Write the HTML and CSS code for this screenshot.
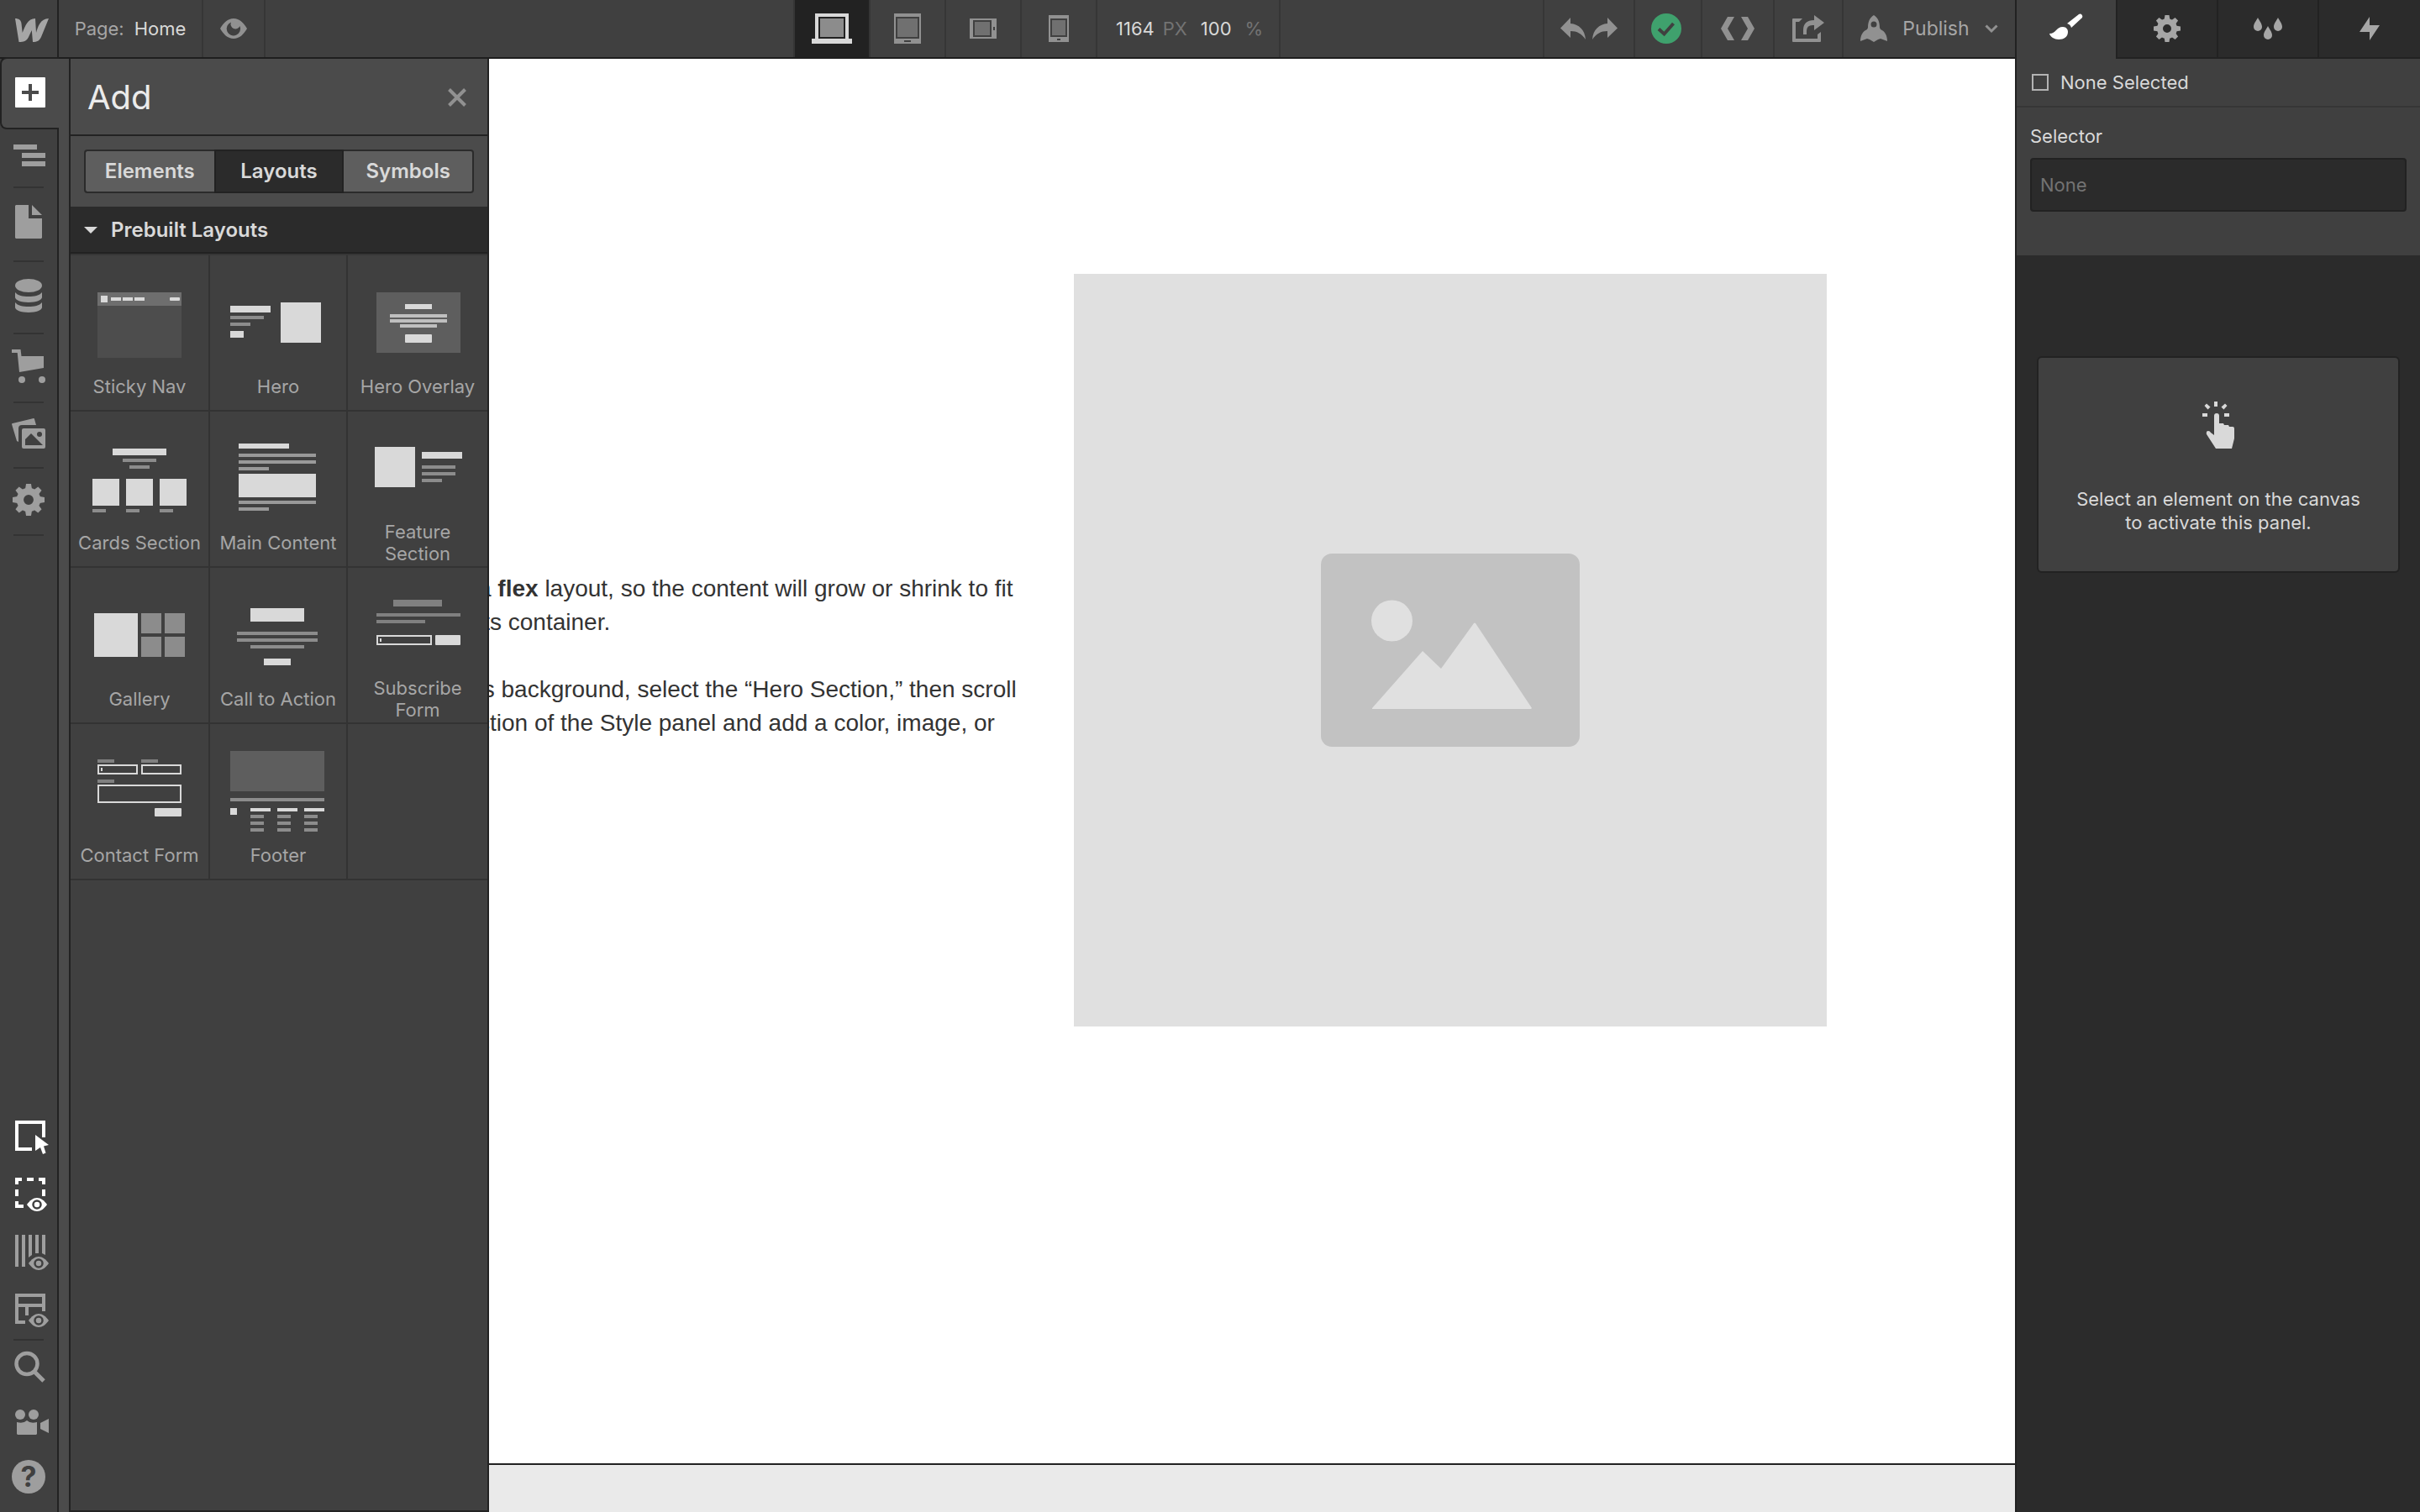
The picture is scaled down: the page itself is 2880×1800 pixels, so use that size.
FILE: index.html
```html
<!DOCTYPE html>
<html lang="en">
<head>
    <meta charset="UTF-8">
    <meta name="viewport" content="width=device-width, initial-scale=1.0">
    <title>Designer - Home</title>
    <link rel="stylesheet" href="styles.css">
</head>
<body>
    <!-- Shared icons -->
    <svg class="symbols" aria-hidden="true">
        <symbol id="gear" viewBox="0 0 32 32">
            <circle cx="16" cy="16" r="8.5" fill="none" stroke="currentColor" stroke-width="7"/>
            <g fill="currentColor">
                <path id="tooth" d="M13.5 0h5l1 6h-7z"/>
                <use href="#tooth" transform="rotate(45 16 16)"/>
                <use href="#tooth" transform="rotate(90 16 16)"/>
                <use href="#tooth" transform="rotate(135 16 16)"/>
                <use href="#tooth" transform="rotate(180 16 16)"/>
                <use href="#tooth" transform="rotate(225 16 16)"/>
                <use href="#tooth" transform="rotate(270 16 16)"/>
                <use href="#tooth" transform="rotate(315 16 16)"/>
            </g>
        </symbol>
        <symbol id="eye" viewBox="0 0 24 16">
            <path d="M0 8C3.5 3 7.5 0 12 0s8.5 3 12 8c-3.5 5-7.5 8-12 8S3.5 13 0 8z" fill="currentColor"/>
            <circle cx="12" cy="8" r="4.5" fill="none" stroke="#404040" stroke-width="2.5"/>
        </symbol>
    </svg>

    <div class="app">
        <div class="workspace">
            <header class="topbar">
                <button class="logo" aria-label="Menu">
                    <svg width="40" height="28" viewBox="0 0 40 28"><path d="M0 0c4.5 0 7 2 7.5 6l1.2 11C12 9 15 0 24 0l1 17C27 10 30 0 40 0L31 22c-2 4.5-5 6-10 6l-1.2-14-4 8.5C13.5 27 10 28 4.5 28z"/></svg>
                </button>
                <div class="topbar-left">
                    <button class="page-name"><span>Page:</span> Home</button>
                    <button class="preview" aria-label="Preview">
                        <svg width="32" height="24" viewBox="0 0 32 24"><path fill-rule="evenodd" d="M0 12C4 5 9 0 16 0s12 5 16 12c-4 7-9 12-16 12S4 19 0 12zM13 4.5A8.200 8.200 0 1 0 23.5 9A5.500 5.500 0 1 1 13 4.500z"/></svg>
                    </button>
                </div>
                <div class="topbar-center">
                    <button class="device active" aria-label="Desktop">
                        <svg width="48" height="36" viewBox="0 0 48 36"><path fill-rule="evenodd" d="M4 0h40v30h4v6H0v-6h4zM8 4v26h32V4z"/><path class="screen" d="M10 6h28v22H10z"/></svg>
                    </button>
                    <button class="device" aria-label="Tablet">
                        <svg width="32" height="36" viewBox="0 0 32 36"><path fill-rule="evenodd" d="M0 0h32v36H0zM2 4v26h28V4zM12 32v2h8v-2z"/><path class="screen" d="M4 6h24v22H4z"/></svg>
                    </button>
                    <button class="device" aria-label="Mobile landscape">
                        <svg width="32" height="24" viewBox="0 0 32 24"><path fill-rule="evenodd" d="M0 0h32v24H0zM4 2v20h22V2zM28 10v4h2v-4z"/><path class="screen" d="M6 4h18v16H6z"/></svg>
                    </button>
                    <button class="device" aria-label="Mobile portrait">
                        <svg width="24" height="32" viewBox="0 0 24 32"><path fill-rule="evenodd" d="M0 0h24v32H0zM2 4v22h20V4zM10 28v2h4v-2z"/><path class="screen" d="M4 6h16v18H4z"/></svg>
                    </button>
                    <div class="canvas-size">
                        <span class="value">1164</span><span class="unit">PX</span>
                        <span class="value zoom">100</span><span class="unit percent">%</span>
                    </div>
                </div>
                <div class="topbar-right">
                    <div class="history">
                        <button aria-label="Undo"><svg width="30" height="26" viewBox="0 0 30 26"><path d="M12 0v7c10 1 17 7 18 19-5-7-10-10-18-10v8L0 12.5z"/></svg></button>
                        <button aria-label="Redo"><svg width="30" height="26" viewBox="0 0 30 26"><path d="M18 0v7C8 8 1 14 0 26c5-7 10-10 18-10v8l12-11.5z"/></svg></button>
                    </div>
                    <button class="saved" aria-label="Saved">
                        <svg width="36" height="36" viewBox="0 0 36 36"><circle cx="18" cy="18" r="18"/><path d="M9 18.5l6.5 6L26.5 12" fill="none" stroke="#404040" stroke-width="4"/></svg>
                    </button>
                    <button class="code" aria-label="Export code">
                        <svg width="40" height="28" viewBox="0 0 40 28"><path d="M8 0h8L8 14l8 14H8L0 14zM32 0h-8l8 14-8 14h8l8-14z"/></svg>
                    </button>
                    <button class="share" aria-label="Share">
                        <svg width="38" height="32" viewBox="0 0 38 32"><path d="M0 5q0-1 1-1h11L8 8H4v20h26v-5l4-3v11q0 1-1 1H1q-1 0-1-1zM26 0l12 9-12 9v-6q-9-1-9 7v4h-4v-5Q13 6 26 6z"/></svg>
                    </button>
                    <button class="publish">
                        <svg width="32" height="32" viewBox="0 0 32 32"><path fill-rule="evenodd" d="M16 0c5 3 7 8 7 15l1 2c5 2 8 7 8 14l-8-3-3 1-5 3-5-3-3-1-8 3c0-7 3-12 8-14l1-2c0-7 2-12 7-15zm0 7.5a3.5 3.5 0 1 0 0 7 3.5 3.5 0 1 0 0-7z"/></svg>
                        Publish
                        <svg width="16" height="10" viewBox="0 0 16 10"><path d="M1.5 1.5L8 8l6.5-6.5" fill="none" stroke="currentColor" stroke-width="3"/></svg>
                    </button>
                </div>
            </header>

            <div class="main">
                <nav class="rail">
                    <div class="rail-group">
                        <button class="active" aria-label="Add">
                            <svg width="44" height="36" viewBox="0 0 44 36"><rect x="6" width="36" height="36" rx="1"/><path d="M22 8h4v8h8v4h-8v8h-4v-8h-8v-4h8z" fill="#4b4b4b"/></svg>
                        </button>
                        <button aria-label="Navigator">
                            <svg width="44" height="28" viewBox="0 0 44 28"><path d="M4 0h28v6H4zM14 10h28v6H14zM14 20h28v6H14z"/></svg>
                        </button>
                        <hr>
                        <button aria-label="Pages">
                            <svg width="44" height="46" viewBox="0 0 44 46"><path d="M7 2h15v16h16v23l-1 1H7l-1-1V3zM26 2l12 12H26z"/></svg>
                        </button>
                        <hr>
                        <button aria-label="CMS">
                            <svg width="44" height="44" viewBox="0 0 44 44"><ellipse cx="22" cy="10" rx="16" ry="8"/><path d="M6 18c3 4 9 5 16 5s13-1 16-5v6c0 3-7 6-16 6s-16-3-16-6zM6 30c3 4 9 5 16 5s13-1 16-5v6c0 3-7 6-16 6s-16-3-16-6z"/></svg>
                        </button>
                        <hr>
                        <button aria-label="Ecommerce">
                            <svg width="44" height="40" viewBox="0 0 44 40"><path d="M2 0h10.5l1 8H40v14L11 27 8.7 4H2z"/><circle cx="14" cy="36" r="4"/><circle cx="38" cy="36" r="4"/></svg>
                        </button>
                        <hr>
                        <button aria-label="Assets">
                            <svg width="44" height="36" viewBox="0 0 44 36"><path d="M2 7Q2 6 3 6L28 0q1 0 1 1l2 7H14q-4 0-4 4v16l-2-1z"/><rect x="14" y="12" width="28" height="24" rx="2"/><path d="M18 32v-7l7-7 14 14z" fill="#404040"/><circle cx="35" cy="19" r="3" fill="#404040"/></svg>
                        </button>
                        <hr>
                        <button aria-label="Settings">
                            <svg width="38" height="38"><use href="#gear"/></svg>
                        </button>
                        <hr>
                    </div>
                    <div class="rail-group rail-bottom">
                        <button class="on" aria-label="Element edges">
                            <svg width="44" height="44" viewBox="0 0 44 44"><path d="M26 34H8V2h32v18" fill="none" stroke="currentColor" stroke-width="4"/><path d="M30 17l16 12-6 1.5 2.500 8L39 40l-3-8-6 4z"/></svg>
                        </button>
                        <button class="on" aria-label="Empty elements">
                            <svg width="44" height="44" viewBox="0 0 44 44"><path d="M6 0h8v4h-4v4H6zM20 0h8v4h-8zM34 0h8v8h-4V4h-4zM6 14h4v8H6zM38 14h4v8h-4zM6 28h4v4h6v4H6z"/><use href="#eye" x="20" y="24" width="24" height="16"/></svg>
                        </button>
                        <button aria-label="Guide overlay">
                            <svg width="44" height="44" viewBox="0 0 44 44"><path d="M6 0h4v38H6zM14 0h4v38h-4zM22 0h4v24l-4 3zM30 0h4v22h-4zM38 0h4v24l-4-2z"/><use href="#eye" x="22" y="26" width="24" height="16"/></svg>
                        </button>
                        <button aria-label="X-ray mode">
                            <svg width="44" height="44" viewBox="0 0 44 44"><path d="M18 36H8V4h32v19M8 16h32M20 16v12" fill="none" stroke="currentColor" stroke-width="4"/><use href="#eye" x="22" y="26" width="24" height="16"/></svg>
                        </button>
                        <hr>
                        <button class="short" aria-label="Search">
                            <svg width="44" height="44" viewBox="0 0 44 44"><path d="M28.5 26.5L40 38" fill="none" stroke="currentColor" stroke-width="5"/><circle cx="20" cy="17.5" r="12.5" fill="none" stroke="currentColor" stroke-width="4.5"/></svg>
                        </button>
                        <button class="short" aria-label="Video tutorials">
                            <svg width="44" height="44" viewBox="0 0 44 44"><circle cx="12" cy="14" r="6"/><circle cx="28" cy="14" r="6"/><path d="M8 23q8 2 12-2 4 4 12 2v14l-1 1H9l-1-1zM46 19v17l-10-5v-7z"/></svg>
                        </button>
                        <button class="short" aria-label="Help">
                            <svg width="44" height="44" viewBox="0 0 44 44"><circle cx="22" cy="24" r="20"/><text class="question" x="22" y="36" text-anchor="middle">?</text></svg>
                        </button>
                    </div>
                </nav>

                <main class="canvas">
                    <section class="hero-section">
                        <div class="hero-container">
                            <div class="hero-text">
                                <p>a <strong>flex</strong> layout, so the content will grow or shrink to fit<br>
                                its container.</p>
                                <p>’s background, select the “Hero Section,” then scroll<br>
                                ction of the Style panel and add a color, image, or</p>
                            </div>
                            <div class="placeholder">
                                <svg viewBox="0 0 308 230"><rect width="308" height="230" rx="13" fill="#c2c2c2"/><circle cx="84.5" cy="80" r="24.5"/><path d="M61 184l60-68 22 21 39-54q1-1 2 0l67 101-1 1H61z"/></svg>
                            </div>
                        </div>
                    </section>
                    <div class="breadcrumbs"></div>
                </main>

                <aside class="add-panel">
                    <div class="panel-header">
                        <h1>Add</h1>
                        <button aria-label="Close"><svg width="22" height="22" viewBox="0 0 22 22"><path d="M1.5 1.5l19 19M20.5 1.5l-19 19" fill="none" stroke="currentColor" stroke-width="4"/></svg></button>
                    </div>
                    <div class="panel-tabs">
                        <button>Elements</button>
                        <button class="active">Layouts</button>
                        <button>Symbols</button>
                    </div>
                    <button class="group-title">
                        <svg width="16" height="8" viewBox="0 0 16 8"><path d="M0 0h16L8 8z"/></svg>
                        Prebuilt Layouts
                    </button>
                    <div class="layouts">
                        <button>
                            <svg width="164" height="130" viewBox="0 0 164 130"><path class="c1" d="M32 44h100v78H32z"/><path class="c3" d="M32 44h100v16H32z"/><path d="M36 48h8v8h-8zM48 50h12v4H48zM62 50h12v4H62zM76 50h12v4H76z"/><rect x="118" y="50" width="12" height="4" rx="1"/></svg>
                            <span>Sticky Nav</span>
                        </button>
                        <button>
                            <svg width="164" height="130" viewBox="0 0 164 130"><path d="M25 60h48v8H25zM25 90h16v8H25zM85 56h48v48H85z"/><path class="c4" d="M25 72h40v4H25zM25 80h24v4H25z"/></svg>
                            <span>Hero</span>
                        </button>
                        <button>
                            <svg width="164" height="130" viewBox="0 0 164 130"><path class="c2" d="M33 44h100v72H33z"/><path d="M67 58h32v6H67z"/><rect x="67" y="94" width="32" height="10" rx="1"/><path class="c6" d="M49 70h68v4H49zM49 76h68v4H49zM61 82h44v4H61z"/></svg>
                            <span>Hero Overlay</span>
                        </button>
                        <button>
                            <svg width="164" height="130" viewBox="0 0 164 130"><path d="M50 44h64v8H50zM26 80h32v32H26zM66 80h32v32H66zM106 80h32v32h-32z"/><path class="c4" d="M62 56h40v4H62zM70 64h24v4H70zM26 116h16v4H26zM66 116h16v4H66zM106 116h16v4h-16z"/></svg>
                            <span>Cards Section</span>
                        </button>
                        <button>
                            <svg width="164" height="130" viewBox="0 0 164 130"><path d="M35 38h60v6H35zM35 74h92v28H35z"/><path class="c5" d="M35 50h92v4H35zM35 58h92v4H35zM35 66h36v4H35zM35 106h92v4H35zM35 114h36v4H35z"/></svg>
                            <span>Main Content</span>
                        </button>
                        <button>
                            <svg width="164" height="130" viewBox="0 0 164 130"><path d="M31 42h48v48H31zM87 48h48v8H87z"/><path class="c4" d="M87 64h40v4H87zM87 72h40v4H87zM87 80h24v4H87z"/></svg>
                            <span>Feature<br>Section</span>
                        </button>
                        <button>
                            <svg width="164" height="130" viewBox="0 0 164 130"><path d="M28 54h52v52H28z"/><path class="c4" d="M84 54h24v24H84zM112 54h24v24h-24zM84 82h24v24H84zM112 82h24v24h-24z"/></svg>
                            <span>Gallery</span>
                        </button>
                        <button>
                            <svg width="164" height="130" viewBox="0 0 164 130"><path d="M49 48h64v16H49zM65 108h32v8H65z"/><path class="c4" d="M33 76h96v4H33zM33 84h96v4H33zM49 92h64v4H49z"/></svg>
                            <span>Call to Action</span>
                        </button>
                        <button>
                            <svg width="164" height="130" viewBox="0 0 164 130"><path class="c7" d="M53 38h58v8H53zM33 54h100v4H33zM33 62h58v4H33z"/><path class="line" d="M34 81h64v10H34z"/><path d="M37 84h2v4h-2z"/><rect x="103" y="80" width="30" height="12" rx="1"/></svg>
                            <span>Subscribe<br>Form</span>
                        </button>
                        <button>
                            <svg width="164" height="130" viewBox="0 0 164 130"><path class="c7" d="M32 42h20v4H32zM84 42h20v4H84zM32 66h20v4H32z"/><path class="line" d="M33 49h46v10H33zM85 49h46v10H85zM33 73h98v20H33z"/><path d="M36 52h2v4h-2z"/><rect x="100" y="100" width="32" height="10" rx="1"/></svg>
                            <span>Contact Form</span>
                        </button>
                        <button>
                            <svg width="164" height="130" viewBox="0 0 164 130"><path class="c2" d="M25 32h112v48H25z"/><path d="M25 100h8v8h-8zM49 100h24v4H49zM81 100h24v4H81zM113 100h24v4h-24z"/><path class="c4" d="M25 88h112v4H25zM49 108h16v4H49zM49 116h16v4H49zM49 124h16v4H49zM81 108h16v4H81zM81 116h16v4H81zM81 124h16v4H81zM113 108h16v4h-16zM113 116h16v4h-16zM113 124h16v4h-16z"/></svg>
                            <span>Footer</span>
                        </button>
                        <div class="empty"></div>
                    </div>
                </aside>
            </div>
        </div>

        <aside class="sidebar">
            <div class="sidebar-tabs">
                <button class="active" aria-label="Style">
                    <svg width="40" height="32" viewBox="0 0 40 32"><path d="M21 12L35 1q2-1 3.5.5T39 5L26 17q-1-4-5-5zM0 24c8 0 8-8 16-8 4 0 6 3 6 6 0 6-5 9-11 9-5 0-10-3-11-7z"/></svg>
                </button>
                <button aria-label="Element settings"><svg width="32" height="32"><use href="#gear"/></svg></button>
                <button aria-label="Style manager">
                    <svg width="34" height="26" viewBox="0 0 34 26"><path id="drop" d="M5 0c2 4 5 7 5 11a5 5 0 0 1-10 0c0-4 3-7 5-11z"/><use href="#drop" x="12" y="10"/><use href="#drop" x="24"/></svg>
                </button>
                <button aria-label="Interactions">
                    <svg width="24" height="28" viewBox="0 0 24 28"><path d="M12 0v10h12L12 28V18H0z"/></svg>
                </button>
            </div>
            <label class="selection"><input type="checkbox"> None Selected</label>
            <div class="selector">
                <label for="selector">Selector</label>
                <input type="text" id="selector" placeholder="None">
            </div>
            <div class="hint">
                <svg width="38" height="56" viewBox="0 0 38 56"><path d="M14 0h4v6h-4zM0 14h6v4H0zM26 14h6v4h-6zM5 2.500l4.500 4-3 3L2.500 5zM27 2.500l-4.500 4 3 3 4-4.500z"/><path d="M14 17q0-3 3-3t3 3v9h5l1 2h5l1 2h4q2 0 2 2v12l-3 12H16L5 39q-1-4 2-4 2 0 3 2l4 3z"/></svg>
                <p>Select an element on the canvas<br>to activate this panel.</p>
            </div>
        </aside>
    </div>
</body>
</html>
```

FILE: styles.css
```css
* {
    box-sizing: border-box;
}

body {
    margin: 0;
    font-family: Inter, "Liberation Sans", sans-serif;
    font-size: 22px;
    line-height: 28px;
    color: #d9d9d9;
    background-color: #404040;
}

button {
    margin: 0;
    padding: 0;
    border: none;
    background: none;
    color: inherit;
    font: inherit;
    cursor: pointer;
}

svg {
    display: block;
    flex: none;
    fill: currentColor;
    overflow: visible;
}

.symbols {
    position: absolute;
    width: 0;
    height: 0;
}

.app {
    display: grid;
    grid-template-columns: 1fr 482px;
    height: 100vh;
    overflow: hidden;
}

.workspace {
    display: flex;
    flex-direction: column;
    min-width: 0;
    height: 100vh;
}

/* Top bar */
.topbar {
    display: grid;
    grid-template-columns: 70px 1fr auto 1fr;
    height: 70px;
    border-bottom: 2px solid #1e1e1e;
    color: #919191;
}

.topbar button {
    display: flex;
    align-items: center;
    justify-content: center;
}

.topbar .logo {
    padding: 4px 0 0 8px;
    border-right: 2px solid #222;
    color: #a6a6a6;
}

.topbar-left,
.topbar-center,
.topbar-right {
    display: flex;
}

.topbar-right {
    justify-content: flex-end;
}

.topbar .page-name {
    width: 172px;
    gap: 12px;
    border-right: 2px solid #363636;
    color: #d9d9d9;
}

.page-name span {
    color: #a6a6a6;
}

.topbar .preview {
    width: 74px;
    border-right: 2px solid #363636;
}

.topbar-center {
    border-left: 2px solid #363636;
}

.topbar .device {
    width: 90px;
    border-right: 2px solid #363636;
}

.topbar .device.active {
    background-color: #222;
    color: #d9d9d9;
}

.screen {
    fill: #707070;
}

.active .screen {
    fill: #8c8c8c;
}

.canvas-size {
    display: flex;
    align-items: center;
    width: 218px;
    padding-left: 22px;
    border-right: 2px solid #363636;
}

.value {
    color: #d9d9d9;
}

.unit {
    margin-left: 10px;
    color: #737373;
}

.zoom,
.percent {
    margin-left: 16px;
}

.history {
    display: flex;
    justify-content: center;
    gap: 8px;
    width: 110px;
    border-left: 2px solid #363636;
    border-right: 2px solid #363636;
}

.topbar .saved {
    width: 80px;
    padding-right: 4px;
    border-right: 2px solid #363636;
    color: #3fa16d;
}

.topbar .code {
    width: 86px;
    border-right: 2px solid #363636;
}

.topbar .share {
    width: 82px;
    border-right: 2px solid #363636;
}

.topbar .publish {
    width: 204px;
    gap: 18px;
    font-size: 23px;
    color: #a6a6a6;
}

.publish svg {
    color: #919191;
}

/* Left rail */
.main {
    position: relative;
    display: flex;
    flex: 1;
    min-height: 0;
}

.rail {
    display: flex;
    flex-direction: column;
    justify-content: space-between;
    width: 70px;
    border-right: 2px solid #222;
    color: #9e9e9e;
}

.rail-group {
    display: flex;
    flex-direction: column;
}

.rail button {
    display: flex;
    justify-content: center;
    padding: 18px 0 22px;
}

.rail .active {
    position: relative;
    z-index: 2;
    margin: -2px -2px 0 0;
    padding: 22px 4px 24px 0;
    border: 2px solid #222;
    border-right: none;
    border-radius: 8px 0 0 8px;
    background-color: #4b4b4b;
    color: #fff;
}

.rail hr {
    width: 36px;
    height: 2px;
    margin: 0 16px;
    border: none;
    background-color: #333;
}

.rail-bottom {
    padding-bottom: 12px;
}

.rail-bottom button {
    padding: 12px 0;
}

.rail-bottom .short {
    padding: 10px 0;
}

.rail .on {
    color: #fff;
}

.question {
    font-size: 34px;
    font-weight: 700;
    fill: #404040;
}

/* Canvas */
.canvas {
    display: flex;
    flex: 1;
    flex-direction: column;
    min-width: 0;
    background-color: #fff;
    color: #333;
    font-family: "Liberation Sans", Arial, sans-serif;
    font-size: 28px;
    line-height: 40px;
}

.hero-section {
    flex: 1;
    padding-top: 256px;
}

.hero-container {
    display: flex;
    align-items: center;
    justify-content: space-between;
    max-width: 1880px;
    margin: 0 auto;
}

.hero-text {
    padding: 14px 0 0 275px;
    white-space: nowrap;
}

.hero-text p {
    margin: 0 0 40px;
}

.hero-text p:last-child {
    margin-bottom: 0;
}

.placeholder {
    display: flex;
    align-items: center;
    justify-content: center;
    width: 896px;
    aspect-ratio: 1;
    background-color: #e0e0e0;
}

.placeholder svg {
    width: 308px;
    fill: #e0e0e0;
}

.breadcrumbs {
    height: 58px;
    border-top: 2px solid #222;
    background-color: #eaeaea;
}

/* Add panel, opens over the canvas */
.add-panel {
    position: absolute;
    top: 0;
    bottom: 0;
    left: 70px;
    width: 512px;
    padding: 0 2px 2px;
    border-left: 12px solid #4b4b4b;
    background-color: #404040;
    box-shadow: inset 2px 0 #222, inset -2px -2px #222;
}

.panel-header {
    display: flex;
    align-items: center;
    justify-content: space-between;
    height: 92px;
    padding: 2px 25px 0 20px;
    border-bottom: 2px solid #222;
    background-color: #4b4b4b;
    color: #919191;
}

.panel-header h1 {
    margin: 0;
    font-size: 40px;
    font-weight: 400;
    line-height: 48px;
    color: #ebebeb;
}

.panel-tabs {
    display: grid;
    grid-template-columns: repeat(3, 1fr);
    padding: 16px;
    background-color: #4b4b4b;
    font-size: 24px;
    font-weight: 600;
}

.panel-tabs button {
    height: 52px;
    border: 2px solid #2b2b2b;
    background-color: #5e5e5e;
}

.panel-tabs button:first-child {
    border-right: none;
    border-radius: 4px 0 0 4px;
}

.panel-tabs button:last-child {
    border-left: none;
    border-radius: 0 4px 4px 0;
}

.panel-tabs .active {
    border-color: #222;
    background-color: #2b2b2b;
}

.group-title {
    display: flex;
    align-items: center;
    gap: 16px;
    width: 100%;
    height: 56px;
    padding: 2px 16px 0;
    border-bottom: 2px solid #222;
    background-color: #2b2b2b;
    font-size: 24px;
    font-weight: 600;
}

.layouts {
    display: grid;
    grid-template-columns: 166px 164px 1fr;
    grid-auto-rows: 186px;
    border-top: 2px solid #363636;
    line-height: 26px;
    color: #a6a6a6;
}

.layouts > * {
    display: flex;
    flex-direction: column;
    align-items: center;
    border-right: 2px solid #333;
    border-bottom: 2px solid #333;
}

.layouts > :nth-child(3n) {
    border-right: none;
}

.layouts span {
    display: flex;
    align-items: center;
    justify-content: center;
    height: 52px;
    white-space: nowrap;
}

/* Thumbnail shades */
.layouts svg {
    fill: #d9d9d9;
}

.c1 { fill: #4d4d4d; }
.c2 { fill: #5e5e5e; }
.c3 { fill: #6e6e6e; }
.c4 { fill: #8c8c8c; }
.c5 { fill: #999; }
.c6 { fill: #bfbfbf; }
.c7 { fill: #808080; }

.line {
    fill: none;
    stroke: #d9d9d9;
    stroke-width: 2;
}

/* Style sidebar */
.sidebar {
    border-left: 2px solid #222;
    background-color: #2b2b2b;
}

.sidebar-tabs {
    display: grid;
    grid-template-columns: repeat(4, 1fr);
    height: 70px;
    color: #a6a6a6;
}

.sidebar-tabs button {
    display: flex;
    align-items: center;
    justify-content: center;
    border-right: 2px solid #222;
    border-bottom: 2px solid #222;
}

.sidebar-tabs button:last-child {
    border-right: none;
}

.sidebar-tabs .active {
    padding-bottom: 6px;
    border-bottom: none;
    background-color: #404040;
    color: #fff;
}

.selection {
    display: flex;
    align-items: center;
    gap: 14px;
    height: 58px;
    padding: 0 18px;
    border-bottom: 2px solid #363636;
    background-color: #404040;
}

.selection input {
    appearance: none;
    width: 20px;
    height: 20px;
    margin: 0;
    border: 2px solid #b3b3b3;
}

.selector {
    padding: 20px 16px 52px;
    background-color: #404040;
}

.selector label {
    display: block;
    margin-bottom: 12px;
}

.selector input {
    display: block;
    width: 100%;
    height: 64px;
    padding: 0 10px;
    border: 2px solid #222;
    border-radius: 4px;
    background-color: #2b2b2b;
    color: #d9d9d9;
    font: inherit;
}

.selector input::placeholder {
    color: #737373;
}

.hint {
    display: flex;
    flex-direction: column;
    align-items: center;
    gap: 46px;
    margin: 120px 24px 0;
    padding: 52px 20px 44px;
    border: 2px solid #222;
    border-radius: 6px;
    background-color: #404040;
    text-align: center;
}

.hint p {
    margin: 0;
}
```
